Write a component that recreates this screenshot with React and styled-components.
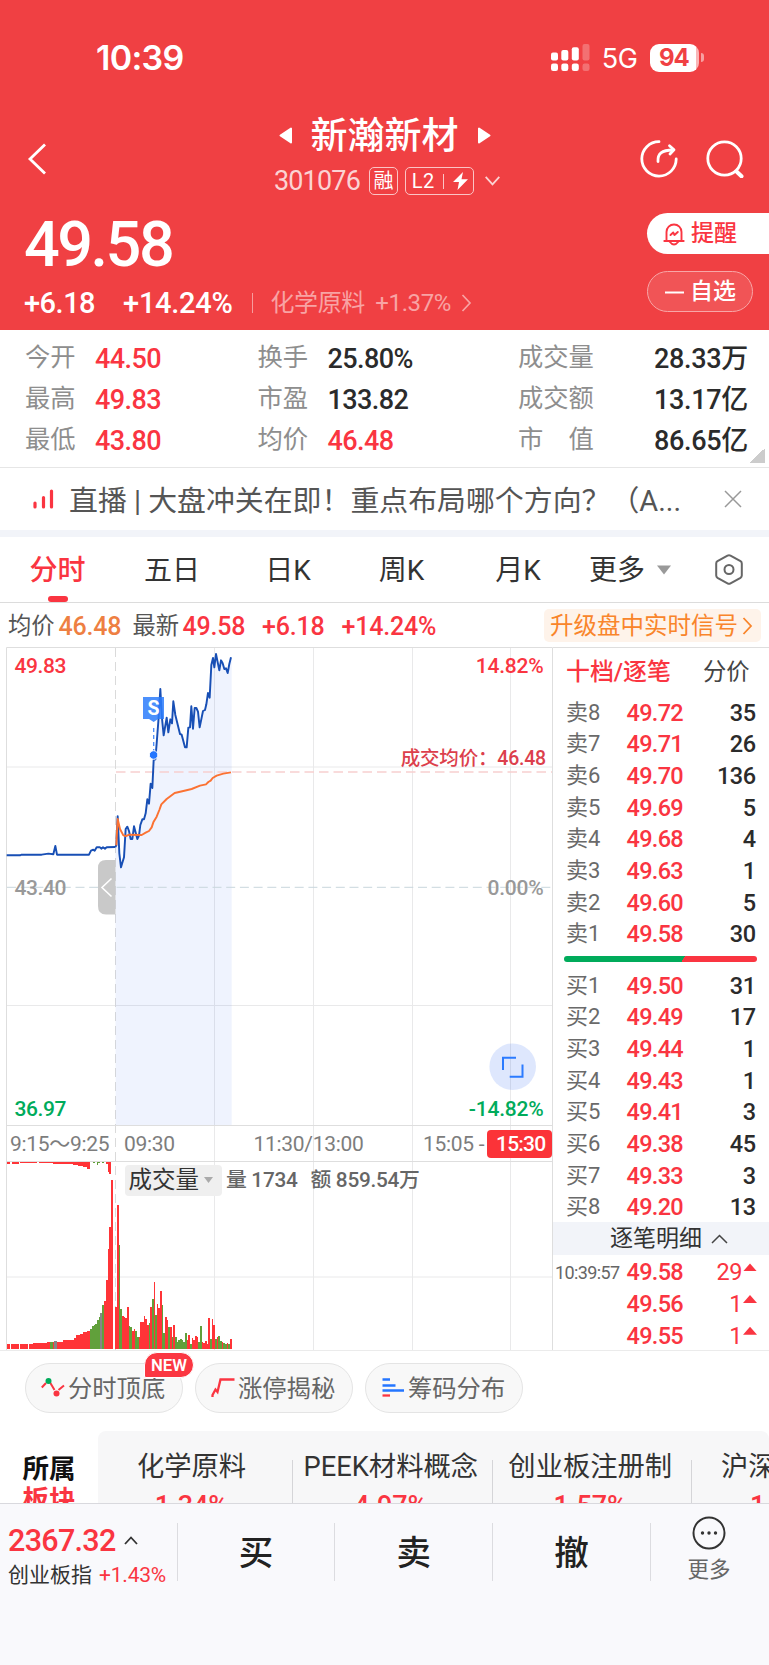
import React from 'react';
import styled, { createGlobalStyle } from 'styled-components';

const RED = '#fa3541';
const GREEN = '#00ab5b';
const FONT = 'Roboto, "Noto Sans CJK SC", sans-serif';

const GlobalStyle = createGlobalStyle`
  * { box-sizing: border-box; }
  body {
    margin: 0;
    background: #fff;
    font-family: ${FONT};
    color: #2b2b2b;
    -webkit-font-smoothing: antialiased;
  }
  svg { display: block; flex: none; }
`;

const Screen = styled.main`
  width: 769px;
  height: 1665px;
  display: flex;
  flex-direction: column;
  overflow: hidden;
  white-space: nowrap;
`;

/* ---------- header ---------- */

const Header = styled.header`
  height: 330px;
  flex: none;
  background: #f04043;
  color: #fff;
`;

const StatusBar = styled.div`
  height: 113px;
  padding: 2px 65px 0 96px;
  display: flex;
  align-items: center;
  justify-content: space-between;
  font-family: Inter, sans-serif;
`;

const Clock = styled.span`
  font-size: 34px;
  font-weight: 600;
  letter-spacing: -0.7px;
  line-height: 40px;
`;

const StatusIcons = styled.div`
  display: flex;
  align-items: center;
`;

const Network = styled.span`
  font-size: 27px;
  line-height: 30px;
  letter-spacing: -0.4px;
  margin: 2px 12.5px 0 12px;
`;

const Battery = styled.span`
  width: 49px;
  height: 28px;
  border-radius: 9px;
  background: linear-gradient(90deg, #fff 46px, #f9b6b7 46px);
  color: #f04043;
  font-size: 24px;
  font-weight: 700;
  line-height: 28px;
  padding-left: 9px;
  letter-spacing: -1px;
`;

const BatteryTip = styled.span`
  width: 3px;
  height: 9px;
  margin-left: 2px;
  border-radius: 0 3px 3px 0;
  background: #f79fa0;
`;

const TitleBar = styled.div`
  height: 91px;
  display: grid;
  grid-template-columns: 1fr 250px 1fr;
  align-items: center;
`;

const TitleBlock = styled.div`
  display: flex;
  flex-direction: column;
  align-items: center;
`;

const TitleLine = styled.div`
  height: 45px;
  display: flex;
  align-items: center;
  gap: 19px;
  font-size: 37px;
  font-weight: 500;
  line-height: 45px;
`;

const TitleName = styled.span`
  padding-top: 2px;
`;

const CodeLine = styled.div`
  height: 46px;
  display: flex;
  align-items: center;
  padding-left: 5px;
  font-size: 27px;
  letter-spacing: -0.8px;
  color: #fbd3d3;
`;

const CodeTag = styled.span`
  height: 28px;
  display: flex;
  align-items: center;
  justify-content: center;
  width: ${(p) => p.$w}px;
  margin-left: ${(p) => p.$ml}px;
  border: 1.5px solid #fbc4c5;
  border-radius: 5px;
  color: #fff;
  font-size: 20px;
  line-height: 25px;
  letter-spacing: 0.4px;
`;

const TagRule = styled.i`
  width: 1px;
  height: 15px;
  margin: 0 9px 0 8px;
  background: #fbc4c5;
`;

const BackButton = styled.div`
  padding-left: 27px;
`;

const TitleActions = styled.div`
  display: flex;
  justify-content: flex-end;
  gap: 28px;
  padding-right: 25px;
`;

const Quote = styled.section`
  height: 126px;
  display: flex;
  justify-content: space-between;
`;

const QuoteMain = styled.div`
  padding-left: 24px;
`;

const LastPrice = styled.div`
  height: 80px;
  line-height: 82px;
  font-size: 63px;
  font-weight: 500;
  letter-spacing: -2.5px;
`;

const ChangeLine = styled.div`
  height: 37px;
  display: flex;
  align-items: center;
  font-size: 29px;
  font-weight: 500;
  line-height: 38px;
  letter-spacing: -0.5px;
`;

const ChangePercent = styled.span`
  margin-left: 28px;
  letter-spacing: -0.3px;
`;

const ChangeRule = styled.i`
  width: 1px;
  height: 20px;
  margin: 0 17px 0 20px;
  background: #f79c9d;
`;

const Industry = styled.span`
  display: flex;
  align-items: center;
  gap: 10.5px;
  color: #f8a3a4;
  font-size: 24px;
  font-weight: 400;
  letter-spacing: -0.4px;
`;

const QuoteActions = styled.div`
  width: 122px;
  padding-top: 9px;
  display: flex;
  flex-direction: column;
  gap: 17px;
`;

const Pill = styled.button`
  height: 41px;
  width: ${(p) => (p.$solid ? 122 : 106)}px;
  padding: 1px 0 0 ${(p) => (p.$solid ? 16 : 17)}px;
  display: flex;
  align-items: center;
  gap: 6px;
  border: ${(p) => (p.$solid ? '0' : '1px solid #f8a6a7')};
  border-radius: ${(p) => (p.$solid ? '21px 0 0 21px' : '21px')};
  background: ${(p) => (p.$solid ? '#fff' : '#f15456')};
  color: ${(p) => (p.$solid ? RED : '#fff')};
  font: 500 23px/40px ${FONT};
`;

/* ---------- key figures ---------- */

const Stats = styled.section`
  height: 138px;
  flex: none;
  padding: 9px 21px 0 25px;
  display: grid;
  grid-template-columns: 232.5px 260.5px 1fr;
  grid-auto-rows: 41px;
  border-bottom: 1px solid #e6e6e6;
  background: linear-gradient(135deg, transparent 50%, #ccc 50%) 750px 118px / 15px 15px no-repeat;
`;

const Stat = styled.div`
  display: flex;
  align-items: center;
  justify-content: ${(p) => (p.$spread ? 'space-between' : 'flex-start')};
`;

const StatLabel = styled.span`
  width: ${(p) => (p.$wide ? 80 : 70)}px;
  padding-bottom: 4px;
  font-size: 25.3px;
  line-height: 37px;
  color: #8e8e8e;
`;

const StatValue = styled.span`
  font-size: 27px;
  font-weight: 500;
  line-height: 41px;
  letter-spacing: ${(p) => (p.$spread ? -0.3 : -0.6)}px;
  color: ${(p) => (p.$up ? RED : '#2b2b2b')};
`;

/* ---------- news strip ---------- */

const News = styled.section`
  height: 69px;
  flex: none;
  padding: 0 27px 0 33px;
  display: flex;
  align-items: center;
  border-bottom: 7px solid #f2f4f9;
`;

const NewsText = styled.span`
  flex: 1;
  padding: 3px 0 0 15px;
  font-size: 28.9px;
  line-height: 40px;
  color: #555;
`;

/* ---------- period tabs ---------- */

const Tabs = styled.nav`
  height: 66px;
  flex: none;
  display: flex;
  align-items: center;
  border-bottom: 1px solid #dcdcdc;
  padding-right: 26px;
`;

const Tab = styled.div`
  width: ${(p) => p.$w}px;
  height: 65px;
  display: flex;
  flex-direction: column;
  align-items: center;
  justify-content: flex-end;
  font-size: 28px;
  line-height: 40px;
  font-weight: ${(p) => (p.$on ? 500 : 400)};
  color: ${(p) => (p.$on ? RED : '#333')};
  &::after {
    content: '';
    width: 20px;
    height: 6px;
    margin-top: 5px;
    border-radius: 3px;
    background: ${(p) => (p.$on ? RED : 'transparent')};
  }
`;

const MoreTab = styled.div`
  flex: 1;
  display: flex;
  align-items: center;
  gap: 12px;
  padding-left: 9px;
  font-size: 28px;
  line-height: 40px;
  color: #333;
`;

const MoreTabLabel = styled.span`
  padding-top: 2px;
`;

/* ---------- summary line ---------- */

const Summary = styled.section`
  height: 44px;
  flex: none;
  padding: 0 8px 0 8px;
  display: flex;
  align-items: center;
`;

const SummaryLabel = styled.span`
  width: ${(p) => p.$w}px;
  font-size: 23.3px;
  line-height: 32px;
  padding-top: 1px;
  color: #555;
`;

const SummaryValue = styled.span`
  width: ${(p) => p.$w}px;
  padding-top: 4px;
  font-size: 25px;
  font-weight: 500;
  line-height: 32px;
  letter-spacing: -0.2px;
  color: ${(p) => p.$c || RED};
`;

const Promo = styled.span`
  margin-left: auto;
  height: 33px;
  margin-top: 1px;
  padding: 1px 8px 0 6px;
  display: flex;
  align-items: center;
  gap: 4px;
  border-radius: 5px;
  background: #fef3ea;
  color: #f9852b;
  font-size: 23.5px;
  line-height: 33px;
`;

/* ---------- chart + order book ---------- */

const Board = styled.section`
  height: 704px;
  flex: none;
  display: flex;
  border-bottom: 1px solid #ebebeb;
`;

const ChartPane = styled.div`
  width: 553px;
  display: grid;
  & > * { grid-area: 1 / 1; }
`;

const ChartOverlay = styled.div`
  padding-top: 479px;
`;

const TimeAxis = styled.div`
  height: 36px;
  padding-left: 10px;
  display: flex;
  align-items: center;
  font-size: 21px;
  letter-spacing: -0.3px;
  line-height: 34px;
  color: #7d7d7d;
`;

const Tick = styled.span`
  width: ${(p) => p.$w}px;
`;

const CloseTick = styled.span`
  width: 65px;
  height: 28px;
  border-radius: 4px;
  background: #fb3338;
  color: #fff;
  font-weight: 500;
  line-height: 29px;
  letter-spacing: -0.8px;
  padding-left: 9px;
`;

const VolumeHead = styled.div`
  padding: 2px 0 0 125px;
  display: flex;
  align-items: center;
  font-size: 20.8px;
  line-height: 31px;
  color: #666;
`;

const VolumePick = styled.span`
  width: 97px;
  height: 31px;
  padding: 0 9px 0 3.5px;
  display: flex;
  align-items: center;
  justify-content: space-between;
  border-radius: 4px;
  background: #efefef;
  color: #333;
  font-size: 23.5px;
  margin-right: 4px;
`;

const VolumeItem = styled.span`
  width: ${(p) => p.$w}px;
  padding-top: 1px;
  font-weight: 500;
  letter-spacing: -0.3px;
`;

const Book = styled.div`
  flex: 1;
  border-top: 1px solid #dedede;
  display: flex;
  flex-direction: column;
  & > * { flex: none; }
`;

const BookTabs = styled.div`
  height: 47px;
  margin-bottom: 2px;
  padding: 0 19.5px 0 13px;
  display: flex;
  align-items: center;
  justify-content: space-between;
  font-size: 23.3px;
  line-height: 40px;
  color: #444;
`;

const BookTabOn = styled.span`
  color: ${RED};
  font-size: 23.9px;
  font-weight: 500;
`;

const Level = styled.div`
  height: 31.67px;
  padding: 0 13.5px 0 13px;
  display: flex;
  align-items: center;
  line-height: 32px;
`;

const LevelName = styled.span`
  width: 60.5px;
  font-size: 22px;
  color: #6a6a6a;
`;

const LevelPrice = styled.span`
  font-size: 23.5px;
  font-weight: 500;
  letter-spacing: -0.7px;
  color: ${RED};
`;

const LevelSize = styled.span`
  flex: 1;
  text-align: right;
  font-size: 23.5px;
  font-weight: 500;
  letter-spacing: -0.5px;
  color: #2b2b2b;
`;

const Balance = styled.div`
  height: 6px;
  margin: 6px 12px 7.5px 11px;
  border-radius: 3px;
  background: linear-gradient(120deg, ${GREEN} 61.5%, ${RED} 61.6%);
`;

const TapeHead = styled.div`
  height: 33px;
  margin: -1px 0 1.7px;
  padding-left: 57px;
  display: flex;
  align-items: center;
  gap: 9px;
  background: #f2f4f9;
  font-size: 23px;
  line-height: 33px;
  color: #333;
`;

const Trade = styled.div`
  height: 31.6px;
  padding: 0 12px 0 2px;
  display: flex;
  align-items: center;
  color: ${RED};
  line-height: 32px;
`;

const TradeTime = styled.span`
  width: 71.5px;
  padding-top: 2px;
  font-size: 18px;
  letter-spacing: -0.6px;
  color: #666;
`;

const TradeSize = styled.span`
  flex: 1;
  text-align: right;
  font-size: 23.5px;
  letter-spacing: -0.4px;
  padding-right: 1px;
`;

const Upward = styled.i`
  width: 14px;
  height: 8px;
  margin-bottom: 10px;
  background: ${RED};
  clip-path: polygon(50% 0, 100% 100%, 0 100%);
`;

/* ---------- feature chips ---------- */

const Chips = styled.section`
  height: 80px;
  flex: none;
  padding: 12px 0 0 25px;
  display: flex;
  gap: 12px;
`;

const Chip = styled.div`
  position: relative;
  width: 158px;
  height: 50px;
  padding-left: 15px;
  display: flex;
  align-items: center;
  gap: 3px;
  border: 1px solid #e4e4e4;
  border-radius: 25px;
  background: #f8f8f8;
  font-size: 24.3px;
  line-height: 46px;
  color: #666;
`;

const ChipLabel = styled.span`
  padding-top: 2px;
`;

const NewBadge = styled.span`
  position: absolute;
  left: 118px;
  top: -12px;
  width: 50px;
  height: 26px;
  border: 1px solid #fff;
  border-radius: 13px 13px 13px 2px;
  background: #fb3742;
  color: #fff;
  font-size: 16.8px;
  font-weight: 600;
  line-height: 25px;
  text-align: center;
`;

/* ---------- sectors ---------- */

const Sectors = styled.section`
  height: 72px;
  flex: none;
  display: flex;
  overflow: hidden;
`;

const SectorTitle = styled.div`
  width: 98px;
  padding: 22px 0 0 22.5px;
  font-size: 26.5px;
  font-weight: 700;
  line-height: 31px;
  color: #111;
`;

const SectorTitleAccent = styled.div`
  color: ${RED};
`;

const SectorStrip = styled.div`
  width: 671px;
  height: 120px;
  padding: 29px 0 0;
  display: flex;
  overflow: hidden;
  border-radius: 8px 8px 0 0;
  background: #f7f7f8;
`;

const Sector = styled.div`
  flex: none;
  width: ${(p) => p.$w}px;
  padding: ${(p) => (p.$first ? '0 7px 0 0' : p.$pad ? `0 0 0 ${p.$pad}px` : '0 3px 0 0')};
  border-right: 1px solid #d5d5d8;
  text-align: ${(p) => (p.$pad ? 'left' : 'center')};
  font-size: 27.3px;
  line-height: 36px;
  color: #333;
`;

const SectorName = styled.div`
  margin-top: -11px;
  height: 39px;
`;

const SectorChange = styled.div`
  padding-left: ${(p) => p.$pad || 0}px;
  font-size: 27px;
  font-weight: 500;
  color: ${RED};
`;

/* ---------- bottom bar ---------- */

const BottomBar = styled.footer`
  height: 162px;
  flex: none;
  padding-top: 18px;
  display: flex;
  border-top: 1px solid #d9d9de;
  background: #f9f9fc;
`;

const IndexCell = styled.div`
  width: 176.5px;
  height: 58px;
  padding-left: 8px;
`;

const IndexValue = styled.div`
  height: 36px;
  display: flex;
  align-items: center;
  gap: 8px;
  font-size: 30.5px;
  font-weight: 500;
  line-height: 37px;
  letter-spacing: -0.7px;
  color: ${RED};
`;

const IndexName = styled.div`
  display: flex;
  gap: 7px;
  font-size: 21px;
  line-height: 35px;
  color: #333;
`;

const IndexChange = styled.span`
  color: ${RED};
  letter-spacing: -0.2px;
`;

const Action = styled.div`
  width: 157.8px;
  height: 58px;
  margin-top: 1px;
  border-left: 1px solid #dcdce0;
  text-align: center;
  font-size: 34.5px;
  font-weight: 500;
  line-height: 61px;
  color: #222;
`;

const MoreAction = styled.div`
  flex: 1;
  height: 58px;
  margin-top: 1px;
  border-left: 1px solid #dcdce0;
  display: flex;
  flex-direction: column;
  align-items: center;
  padding-right: 2px;
  font-size: 21.5px;
  line-height: 30px;
  color: #666;
`;

const MoreIconWrap = styled.div`
  height: 39px;
  flex: none;
  margin-top: -7px;
  display: flex;
`;

/* ---------- data ---------- */

const stats = [
  ['今开', '44.50', true], ['换手', '25.80%'], ['成交量', '28.33万'],
  ['最高', '49.83', true], ['市盈', '133.82'], ['成交额', '13.17亿'],
  ['最低', '43.80', true], ['均价', '46.48', true], ['市　值', '86.65亿'],
];

const asks = [
  ['卖8', '49.72', 35], ['卖7', '49.71', 26], ['卖6', '49.70', 136], ['卖5', '49.69', 5],
  ['卖4', '49.68', 4], ['卖3', '49.63', 1], ['卖2', '49.60', 5], ['卖1', '49.58', 30],
];

const bids = [
  ['买1', '49.50', 31], ['买2', '49.49', 17], ['买3', '49.44', 1], ['买4', '49.43', 1],
  ['买5', '49.41', 3], ['买6', '49.38', 45], ['买7', '49.33', 3], ['买8', '49.20', 13],
];

const trades = [['10:39:57', '49.58', 29], ['', '49.56', 1], ['', '49.55', 1]];

const PRE_LINE = '20,646 60,646 65,644 125,644 145,641 160,643 166,618 171,644 267,644 273,632 280,629 284,632 290,622 300,622 304,626 309,622 315,626 320,622 346,621';
const PRICE_LINE = '346,621 349,616 353,529 358,640 363,682 372,652 377,567 382,560 387,573 392,597 397,597 402,559 412,597 417,587 421,555 427,538 432,538 437,520 442,478 447,491 452,431 457,444 461,360 466,358 470,310 475,245 481,147 486,235 491,286 500,233 505,277 511,238 516,250 520,184 526,225 540,282 545,284 555,322 560,322 565,263 570,262 574,199 579,266 584,204 589,204 594,215 599,262 609,213 615,210 619,193 624,159 629,173 634,75 639,54 643,82 648,42 658,91 663,61 668,70 673,87 678,85 683,99 688,72 693,52';
const AVG_LINE = '349,616 353,537 360,567 370,586 378,588 388,584 425,585 437,578 447,573 455,562 460,547 470,530 478,510 484,493 500,477 524,459 550,453 575,447 600,437 618,433 625,426 632,422 638,414 650,407 670,401 693,397';

const R = '#ff3437';
const G = '#61a03b';
const GR = '#868686';

/* auction volume runs: start, end, height, colour */
const auction = [
  [20, 30, 16, R], [34, 56, 16, R], [60, 83, 16, R], [87, 100, 16, R], [100, 120, 18, R], [120, 140, 20, R],
  [140, 150, 21, R], [150, 158, 21, G], [158, 162, 21, R], [162, 170, 25, GR], [170, 190, 22, R], [190, 222, 28, R],
  [222, 228, 33, R], [228, 240, 42, R], [240, 250, 46, R], [250, 260, 53, R], [260, 270, 56, R],
  [270, 275, 60, G], [275, 281, 69, G], [281, 286, 73, G], [286, 291, 77, G], [291, 296, 87, G], [296, 301, 98, G],
  [301, 307, 108, GR], [307, 312, 133, G], [312, 318, 145, R], [318, 323, 208, R], [323, 328, 302, R],
  [328, 334, 367, R], [334, 340, 507, R],
];

const hanging = [
  [20, 30, 7, R], [35, 57, 7, R], [60, 112, 5, R], [116, 160, 5, R], [160, 200, 6, R], [200, 220, 8, R],
  [220, 235, 11, R], [235, 250, 13, R], [250, 262, 16, R], [262, 271, 21, R], [280, 285, 4, G], [290, 295, 10, G],
  [295, 300, 4, G], [306, 312, 5, G], [318, 323, 6, R], [323, 328, 30, R], [328, 334, 37, R],
];

const session = [
  [128, R], [434, R], [314, G], [120, G], [100, R], [96, R], [94, R], [126, R], [70, G], [67, G], [54, R], [61, R],
  [55, G], [36, G], [38, R], [81, R], [83, R], [99, R], [91, R], [73, R], [78, G], [128, R], [152, G], [202, R],
  [103, G], [137, R], [124, R], [174, R], [133, G], [50, G], [98, R], [88, R], [68, G], [68, R], [38, G], [74, R],
  [38, G], [23, G], [27, G], [31, G], [29, G], [22, G], [48, G], [27, R], [43, R], [17, G], [33, R], [28, R],
  [40, R], [38, R], [22, G], [70, G], [21, R], [18, R], [25, R], [17, R], [93, R], [32, G], [91, R], [73, R],
  [30, G], [38, R], [40, G], [25, G], [23, R], [18, G], [17, G], [19, R], [15, G], [32, R],
];

const Chart = () => (
  <svg width="553" height="703" viewBox="0 647 553 703" fontFamily={FONT}>
    <g stroke="#e9e9ea" strokeWidth="1" fill="none">
      <path d="M214.5 648V1350M313.5 648V1350M412.5 648V1350M510.5 648V1350" />
      <path d="M7 767H552M7 1005.5H552M7 1277H552" />
    </g>
    <path d="M115.5 648V1350" stroke="#dadada" strokeDasharray="9 5" />
    <g transform="translate(0 640) scale(.33333)">
      <path d={`M${PRICE_LINE.replace(/ /g, 'L')}L695 52V1455H347Z`} fill="#2f6bf5" fillOpacity=".08" />
    </g>
    <path d="M6.5 1350V647.5H552.5V1350" fill="none" stroke="#dedede" />
    <path d="M7 1125.5H552M7 1161.5H552" stroke="#dedede" />
    <path d="M7 887.3H552" stroke="#c9d6dc" strokeDasharray="9 4.7" />
    <path d="M116 772H552" stroke="#f8cfd0" strokeWidth="1.6" strokeDasharray="9.5 5" />
    <g transform="translate(0 640) scale(.33333)" fill="none" strokeWidth="5.8" strokeLinejoin="round">
      <polyline points={PRE_LINE} stroke="#184fb5" />
      <polyline points={PRICE_LINE} stroke="#184fb5" />
      <polyline points={AVG_LINE} stroke="#fb7233" />
    </g>
    <g transform="translate(0 1120) scale(.33333)" shapeRendering="crispEdges">
      {auction.map(([a, b, h, c]) => <rect key={a} x={a} y={688 - h} width={b - a} height={h} fill={c} />)}
      {hanging.map(([a, b, h, c]) => <rect key={a} x={a} y={125} width={b - a} height={h} fill={c} />)}
      {session.map(([h, c], i) => (
        <rect key={i} x={346 + i * 4.98} y={688 - h} width={5} height={h} fill={c} />
      ))}
    </g>
    <path d="M153.7 728V752" stroke="#4a8cf8" strokeWidth="1.3" strokeDasharray="4 3" />
    <circle cx="153.6" cy="755" r="4.3" fill="#2476ff" stroke="#fff" strokeWidth="1" />
    <path d="M143 697H164V719H158L153.7 722L149 719H143Z" fill="#2d7dfb" fillOpacity=".85" />
    <text x="153.6" y="715" fontSize="19.5" fontWeight="700" fill="#fff" textAnchor="middle">S</text>
    <path d="M115.5 860H106Q98 860 98 868V906Q98 914.5 106 914.5H115.5Z" fill="#c9c9c9" />
    <path d="M111.5 878.5L102 887.5L111.5 896.5" fill="none" stroke="#fff" strokeWidth="1.6" />
    <circle cx="512.7" cy="1066.7" r="23.3" fill="#2f6bf5" fillOpacity=".16" />
    <path d="M503 1070V1057.7H516M509.7 1076.7H522.5V1064.5" fill="none" stroke="#2b7bff" strokeWidth="2" />
    <g fontSize="21" fontWeight="500" letterSpacing="-.4">
      <text x="14.5" y="672.5" fill={RED}>49.83</text>
      <text x="14.5" y="895" fill="#999">43.40</text>
      <text x="14.5" y="1116" fill={GREEN}>36.97</text>
    </g>
    <g fontSize="21" fontWeight="500" letterSpacing="-.2" textAnchor="end">
      <text x="543.5" y="672.5" fill={RED}>14.82%</text>
      <text x="543.5" y="895" fill="#999">0.00%</text>
      <text x="543.5" y="1116" fill={GREEN}>-14.82%</text>
      <text x="546" y="764.5" fontSize="19.5" fill="#dc3f4c">成交均价：46.48</text>
    </g>
  </svg>
);

const Caret = ({ w, h, color }) => (
  <svg width={w} height={h} viewBox="0 0 14 9"><path d="M0 0H14L7 9Z" fill={color} /></svg>
);

const Chevron = ({ w, h, d, color, sw = 1.8 }) => (
  <svg width={w} height={h} fill="none" stroke={color} strokeWidth={sw}><path d={d} /></svg>
);

const SignalIcon = () => (
  <svg width="39" height="28" viewBox="0 0 39 28" fill="#fff">
    <rect x="0" y="8.5" width="7" height="8" rx="2" />
    <rect x="10.3" y="6" width="7" height="10.5" rx="2" />
    <rect x="20.8" y="3.2" width="7" height="13.3" rx="2" />
    <rect x="0" y="19.5" width="7" height="7.5" rx="2.2" />
    <rect x="10.3" y="19.5" width="7" height="7.5" rx="2.2" />
    <rect x="20.8" y="19.5" width="7" height="7.5" rx="2.2" />
    <g opacity=".25">
      <rect x="31.5" y="0" width="7" height="16.5" rx="2" />
      <rect x="31.5" y="19.5" width="7" height="7.5" rx="2.2" />
    </g>
  </svg>
);

const ShareIcon = () => (
  <svg width="38" height="38" viewBox="0 0 38 38" fill="none" stroke="#fff" strokeWidth="2.8" strokeLinecap="round" strokeLinejoin="round">
    <path d="M19 1.7A17.2 17.2 0 1 0 36.2 19" />
    <path d="M18 21.5C17.5 14 21.5 10 33 10" />
    <path d="M29.5 5.8L34 9.8L30 14" />
  </svg>
);

const SearchIcon = () => (
  <svg width="38" height="38" viewBox="0 0 38 38" fill="none" stroke="#fff" strokeWidth="2.8" strokeLinecap="round">
    <circle cx="18.5" cy="18.5" r="16.7" />
    <path d="M30.5 31.5L35.5 36.3" strokeWidth="4" />
  </svg>
);

const BellIcon = () => (
  <svg width="22" height="23" viewBox="0 0 22 23" fill="none" stroke={RED} strokeWidth="1.9" strokeLinejoin="round" strokeLinecap="round">
    <path d="M1.3 18H20.7M3.5 18V9A7.5 7.5 0 0 1 18.5 9V18" />
    <path d="M6.5 18.5Q11 24.5 15.5 18.5" />
    <path d="M7.5 12L10.2 9.5L11.5 12L14.8 9" />
  </svg>
);

export default function App() {
  return (
    <Screen>
      <GlobalStyle />
      <Header>
        <StatusBar>
          <Clock>10:39</Clock>
          <StatusIcons>
            <SignalIcon />
            <Network>5G</Network>
            <Battery>94</Battery>
            <BatteryTip />
          </StatusIcons>
        </StatusBar>
        <TitleBar>
          <BackButton>
            <Chevron w={20} h={32} d="M18 1.5L3 16L18 30.5" color="#fff" sw={2.8} />
          </BackButton>
          <TitleBlock>
            <TitleLine>
              <svg width="13" height="17" viewBox="0 0 13 17"><path d="M12 1.5V15.5L1.5 8.5Z" fill="#fff" stroke="#fff" strokeWidth="2" strokeLinejoin="round" /></svg>
              <TitleName>新瀚新材</TitleName>
              <svg width="13" height="17" viewBox="0 0 13 17"><path d="M1 1.5V15.5L11.5 8.5Z" fill="#fff" stroke="#fff" strokeWidth="2" strokeLinejoin="round" /></svg>
            </TitleLine>
            <CodeLine>
              <span>301076</span>
              <CodeTag $w={29} $ml={9}>融</CodeTag>
              <CodeTag $w={69} $ml={7}>
                L2<TagRule />
                <svg width="15" height="18" viewBox="0 0 15 18"><path d="M10 0L0 10H6L4.5 18L15 7.2H8.5Z" fill="#fff" /></svg>
              </CodeTag>
              <svg width="26" height="10" viewBox="-11 0 26 10" fill="none" stroke="#fbd3d3" strokeWidth="1.8"><path d="M.7 .8L7.5 8.3L14.3 .8" /></svg>
            </CodeLine>
          </TitleBlock>
          <TitleActions><ShareIcon /><SearchIcon /></TitleActions>
        </TitleBar>
        <Quote>
          <QuoteMain>
            <LastPrice>49.58</LastPrice>
            <ChangeLine>
              <span>+6.18</span>
              <ChangePercent>+14.24%</ChangePercent>
              <ChangeRule />
              <Industry>
                <span>化学原料</span><span>+1.37%</span>
                <Chevron w={11} h={18} d="M1.5 1L9 9L1.5 17" color="#f8a3a4" sw={1.7} />
              </Industry>
            </ChangeLine>
          </QuoteMain>
          <QuoteActions>
            <Pill $solid><BellIcon />提醒</Pill>
            <Pill><Chevron w={19} h={3} d="M0 1.5H19" color="#fff" sw={2} />自选</Pill>
          </QuoteActions>
        </Quote>
      </Header>

      <Stats>
        {stats.map(([label, value, up], i) => (
          <Stat key={label + i} $spread={i % 3 === 2}>
            <StatLabel $wide={i % 3 === 2}>{label}</StatLabel>
            <StatValue $up={up} $spread={i % 3 === 2}>{value}</StatValue>
          </Stat>
        ))}
      </Stats>

      <News>
        <svg width="21" height="20" viewBox="0 0 21 20" stroke={RED} strokeWidth="3.2" strokeLinecap="round">
          <path d="M2 14V18M10.5 8.5V18M18.5 2V18" />
        </svg>
        <NewsText>直播 | 大盘冲关在即！重点布局哪个方向？（A...</NewsText>
        <Chevron w={18} h={18} d="M1 1L17 17M17 1L1 17" color="#999" sw={1.5} />
      </News>

      <Tabs>
        <Tab $w={115} $on>分时</Tab>
        <Tab $w={114}>五日</Tab>
        <Tab $w={118}>日K</Tab>
        <Tab $w={109}>周K</Tab>
        <Tab $w={124}>月K</Tab>
        <MoreTab><MoreTabLabel>更多</MoreTabLabel><Caret w={14} h={10} color="#999" /></MoreTab>
        <svg width="28" height="31" viewBox="0 0 28 31" fill="none" stroke="#666" strokeWidth="2">
          <path d="M12.5 1.6Q14 .8 15.5 1.6L25.5 7.2Q26.8 8 26.8 9.5V21.5Q26.8 23 25.5 23.8L15.5 29.4Q14 30.2 12.5 29.4L2.5 23.8Q1.2 23 1.2 21.5V9.5Q1.2 8 2.5 7.2Z" />
          <circle cx="14" cy="15.5" r="4.5" />
        </svg>
      </Tabs>

      <Summary>
        <SummaryLabel $w={50.5}>均价</SummaryLabel>
        <SummaryValue $w={74} $c="#ee7f42">46.48</SummaryValue>
        <SummaryLabel $w={50}>最新</SummaryLabel>
        <SummaryValue $w={79.5}>49.58</SummaryValue>
        <SummaryValue $w={79.5}>+6.18</SummaryValue>
        <SummaryValue>+14.24%</SummaryValue>
        <Promo>
          升级盘中实时信号
          <Chevron w={11} h={18} d="M1.5 1L9 9L1.5 17" color="#f9852b" />
        </Promo>
      </Summary>

      <Board>
        <ChartPane>
          <Chart />
          <ChartOverlay>
            <TimeAxis>
              <Tick $w={114}>9:15～9:25</Tick>
              <Tick $w={129.5}>09:30</Tick>
              <Tick $w={169.5}>11:30/13:00</Tick>
              <Tick $w={64}>15:05 -</Tick>
              <CloseTick>15:30</CloseTick>
            </TimeAxis>
            <VolumeHead>
              <VolumePick>成交量<Caret w={9} h={6} color="#aaa" /></VolumePick>
              <VolumeItem $w={84.5}>量 1734</VolumeItem>
              <VolumeItem>额 859.54万</VolumeItem>
            </VolumeHead>
          </ChartOverlay>
        </ChartPane>
        <Book>
          <BookTabs><BookTabOn>十档/逐笔</BookTabOn><span>分价</span></BookTabs>
          {asks.map(([n, p, s]) => (
            <Level key={n}><LevelName>{n}</LevelName><LevelPrice>{p}</LevelPrice><LevelSize>{s}</LevelSize></Level>
          ))}
          <Balance />
          {bids.map(([n, p, s]) => (
            <Level key={n}><LevelName>{n}</LevelName><LevelPrice>{p}</LevelPrice><LevelSize>{s}</LevelSize></Level>
          ))}
          <TapeHead>逐笔明细<Chevron w={17} h={10} d="M1 9L8.5 1.5L16 9" color="#444" sw={1.5} /></TapeHead>
          {trades.map(([t, p, s]) => (
            <Trade key={p}>
              <TradeTime>{t}</TradeTime><LevelPrice>{p}</LevelPrice><TradeSize>{s}</TradeSize><Upward />
            </Trade>
          ))}
        </Book>
      </Board>

      <Chips>
        <Chip>
          <svg width="24" height="20" viewBox="0 0 24 20" fill="none" stroke={RED} strokeWidth="2">
            <path d="M.8 9.5L5 5M8.5 3.5L13.5 12M17.5 12L23 7.5" />
            <circle cx="7.5" cy="3" r="3" fill={GREEN} stroke="none" />
            <circle cx="15.5" cy="15.5" r="3" fill={RED} stroke="none" />
          </svg>
          <ChipLabel>分时顶底</ChipLabel>
          <NewBadge>NEW</NewBadge>
        </Chip>
        <Chip>
          <svg width="24" height="20" viewBox="0 0 24 20" fill="none" stroke={RED} strokeWidth="2.3">
            <path d="M1.5 19V17L4.5 11.5L6.5 14L9.5 1.5H23.5" />
          </svg>
          <ChipLabel>涨停揭秘</ChipLabel>
        </Chip>
        <Chip>
          <svg width="24" height="20" viewBox="0 0 24 20" fill="none" stroke="#2476ff" strokeWidth="2.3">
            <path d="M1.5 1.5H9M1.5 7.5H14.5M1.5 12.5H23" />
            <path d="M1.5 17.5H9" stroke={RED} />
          </svg>
          <ChipLabel>筹码分布</ChipLabel>
        </Chip>
      </Chips>

      <Sectors>
        <SectorTitle>所属<SectorTitleAccent>板块</SectorTitleAccent></SectorTitle>
        <SectorStrip>
          <Sector $w={195} $first><SectorName>化学原料</SectorName><SectorChange>1.34%</SectorChange></Sector>
          <Sector $w={199.5}><SectorName>PEEK材料概念</SectorName><SectorChange>4.97%</SectorChange></Sector>
          <Sector $w={199.5}><SectorName>创业板注册制</SectorName><SectorChange>1.57%</SectorChange></Sector>
          <Sector $w={199.5} $pad={29}><SectorName>沪深</SectorName><SectorChange $pad={29}>1</SectorChange></Sector>
        </SectorStrip>
      </Sectors>

      <BottomBar>
        <IndexCell>
          <IndexValue>
            2367.32
            <Chevron w={14} h={9} d="M1 8L7 1.5L13 8" color="#333" sw={1.8} />
          </IndexValue>
          <IndexName>创业板指<IndexChange>+1.43%</IndexChange></IndexName>
        </IndexCell>
        <Action>买</Action>
        <Action>卖</Action>
        <Action>撤</Action>
        <MoreAction>
          <MoreIconWrap>
            <svg width="34" height="34" viewBox="0 0 34 34" fill="none" stroke="#333" strokeWidth="2">
              <circle cx="17" cy="17" r="15.5" />
              <g fill="#333" stroke="none">
                <circle cx="10.5" cy="17" r="1.7" /><circle cx="17" cy="17" r="1.7" /><circle cx="23.5" cy="17" r="1.7" />
              </g>
            </svg>
          </MoreIconWrap>
          更多
        </MoreAction>
      </BottomBar>
    </Screen>
  );
}
